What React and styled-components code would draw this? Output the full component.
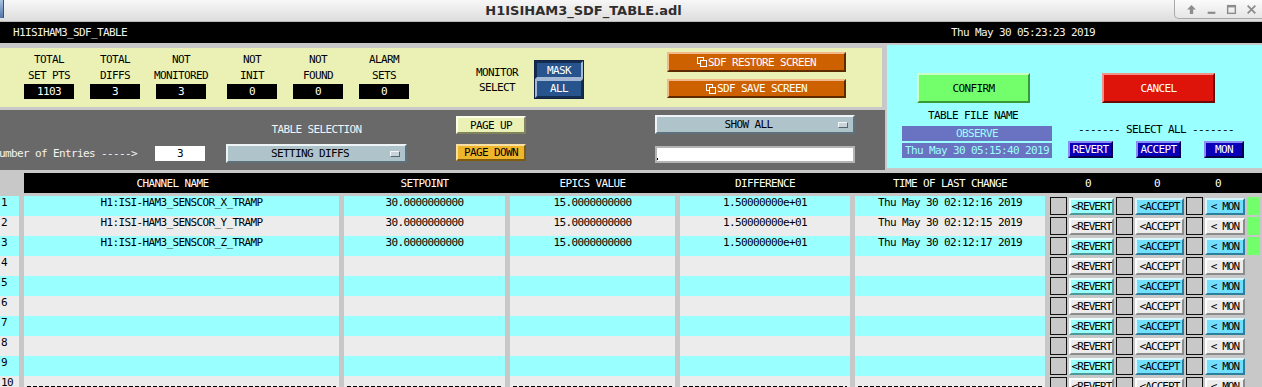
import React from "react";
import styled, { createGlobalStyle, css } from "styled-components";

const MONO = `"DejaVu Sans Mono", "Liberation Mono", monospace`;

const GlobalStyle = createGlobalStyle`
  html, body {
    margin: 0;
    padding: 0;
    background: #c8c8c8;
    overflow: hidden;
  }
  * {
    box-sizing: border-box;
  }
`;

const Screen = styled.div`
  width: 1262px;
  height: 387px;
  overflow: hidden;
  background: #c8c8c8;
  font-family: ${MONO};
  font-size: 11px;
  letter-spacing: -0.62px;
  color: #000;
`;

/* ---------- window decoration ---------- */

const TitleBar = styled.div`
  height: 22px;
  display: flex;
  align-items: flex-start;
  background: linear-gradient(#f7f7f7, #dddddd);
  border-bottom: 1px solid #bcbcbc;
  letter-spacing: 0;
`;

const AppIcon = styled.div`
  width: 4px;
  height: 18px;
  background: linear-gradient(#a9c2e2, #4f74a8);
  border-right: 1px solid #34527a;
`;

const WindowTitle = styled.div`
  flex: 1;
  height: 21px;
  display: flex;
  align-items: center;
  justify-content: center;
  padding-right: 11px;
  font-family: "DejaVu Sans", "Liberation Sans", sans-serif;
  font-weight: bold;
  font-size: 13px;
  color: #2e2e2e;
`;

const WindowControls = styled.div`
  width: 88px;
  height: 19px;
  display: flex;
  align-items: center;
  justify-content: space-around;
  padding: 0 0 0 6px;
  border: 1px solid #a9a9a9;
  border-top: none;
  border-right: none;
  border-bottom-left-radius: 5px;
  background: linear-gradient(#fbfbfb, #e6e6e6);
`;

const ScreenHeader = styled.div`
  height: 21px;
  background: #000;
  color: #f2f2f2;
  display: grid;
  grid-template-columns: 938px 1fr;
  align-items: center;
  padding-left: 13px;
`;

/* ---------- bevelled widgets ---------- */

const Bevel = styled.div`
  display: flex;
  align-items: center;
  justify-content: center;
  white-space: nowrap;
  overflow: hidden;
  background: ${(p) => p.$bg};
  border-style: solid;
  border-width: 2px;
  border-color: ${(p) => `${p.$hi} ${p.$lo} ${p.$lo} ${p.$hi}`};
`;

/* ---------- top section ---------- */

const TopSection = styled.div`
  display: grid;
  grid-template-columns: 885px 1fr;
  column-gap: 2px;
  padding-top: 2px;
  height: 127px;
`;

const LeftColumn = styled.div`
  display: flex;
  flex-direction: column;
  gap: 3px;
  padding-top: 3px;
`;

const MonitorPanel = styled.div`
  width: 882px;
  height: 59px;
  background: #ebf1b5;
  display: flex;
  align-items: flex-start;
`;

const StatGroup = styled.div`
  display: flex;
  gap: 16px;
  padding: 4px 0 0 24px;
`;

const Stat = styled.div`
  width: 50px;
  margin-left: ${(p) => p.$extra || 0}px;
  display: flex;
  flex-direction: column;
  align-items: center;
  line-height: 16px;
  white-space: nowrap;
`;

const StatValue = styled.div`
  width: 50px;
  height: 15px;
  background: #000;
  color: #fff;
  text-align: center;
  line-height: 15px;
`;

const MonitorSelect = styled.div`
  display: flex;
  align-items: center;
  gap: 16px;
  margin: 12px 0 0 67px;
`;

const MonitorLabel = styled.div`
  line-height: 15px;
  text-align: center;
`;

const ChoiceStack = styled.div`
  width: 50px;
  display: flex;
  flex-direction: column;
  border: 1px solid #0f2444;
`;

const ChoiceButton = styled(Bevel)`
  height: ${(p) => p.$h}px;
  color: #fff;
`;

const SdfGroup = styled.div`
  display: flex;
  flex-direction: column;
  gap: 7px;
  margin: 4px 0 0 83px;
`;

const SdfButton = styled(Bevel)`
  width: 179px;
  height: ${(p) => p.$h}px;
  color: #fff;
  gap: 1px;
`;

const ControlPanel = styled.div`
  height: 60px;
  background: #696969;
  display: flex;
  align-items: flex-start;
  color: #f4f4f4;
`;

const EntriesGroup = styled.div`
  display: flex;
  align-items: center;
  gap: 18px;
  margin: 36px 0 0 -7px;
  white-space: nowrap;
`;

const EntriesBox = styled.div`
  width: 50px;
  height: 15px;
  background: #fff;
  color: #000;
  text-align: center;
  line-height: 15px;
`;

const SelectionGroup = styled.div`
  display: flex;
  flex-direction: column;
  align-items: center;
  gap: 8px;
  margin: 14px 0 0 21px;
  line-height: 12px;
`;

const MenuButton = styled(Bevel)`
  width: ${(p) => p.$w}px;
  height: 19px;
  color: #000;
  justify-content: flex-start;
`;

const MenuText = styled.span`
  flex: 1;
  text-align: center;
  padding-left: 2px;
`;

const MenuMark = styled.span`
  width: 10px;
  height: 6px;
  margin-right: 5px;
  background: #c8d4da;
  border: 1px solid;
  border-color: #f2f6f8 #56666e #56666e #f2f6f8;
`;

const PageGroup = styled.div`
  display: flex;
  flex-direction: column;
  gap: 10px;
  margin: 6px 0 0 49px;
`;

const PageButton = styled(Bevel)`
  width: 70px;
  height: ${(p) => p.$h}px;
  color: #000;
`;

const FilterGroup = styled.div`
  display: flex;
  flex-direction: column;
  gap: 12px;
  margin: 5px 0 0 129px;
`;

const TextField = styled.div`
  width: 200px;
  height: 17px;
  background: #fff;
  border: 2px solid #b4b4b4;
  display: flex;
  align-items: flex-end;
`;

const Caret = styled.span`
  width: 1px;
  height: 2px;
  background: #000;
  margin: 0 0 1px 0;
`;

/* ---------- commit (cyan) panel ---------- */

const CommitPanel = styled.div`
  height: 123px;
  background: #99ffff;
  display: grid;
  grid-template-columns: 150px 176px;
  column-gap: 16px;
  padding-left: 15px;
`;

const CommitColumn = styled.div`
  display: flex;
  flex-direction: column;
  padding-top: 28px;
`;

const BigButton = styled(Bevel)`
  width: 113px;
  height: 30px;
  margin-left: ${(p) => p.$ml}px;
  align-self: flex-start;
  color: ${(p) => p.$fg};
`;

const FileLabel = styled.div`
  margin-top: 7px;
  line-height: 12px;
  text-align: center;
  padding-right: 8px;
`;

const NameBox = styled.div`
  margin-top: ${(p) => p.$mt}px;
  height: 15px;
  background: #6a73c1;
  color: #9cffff;
  text-align: center;
  line-height: 15px;
  white-space: nowrap;
`;

const SelectAllLabel = styled.div`
  margin-top: 21px;
  line-height: 12px;
  text-align: center;
  white-space: nowrap;
`;

const SelectAllRow = styled.div`
  margin-top: 5px;
  display: flex;
  justify-content: space-between;
`;

const SelectAllButton = styled(Bevel)`
  width: ${(p) => p.$w}px;
  height: 17px;
  color: #fff;
`;

/* ---------- table ---------- */

const TableArea = styled.div`
  padding-top: 3px;
`;

const HeaderRow = styled.div`
  margin-left: 24px;
  height: 20px;
  margin-bottom: 3px;
  background: #000;
  color: #fff;
  display: grid;
  grid-template-columns: 315px 161px 165px 170px 190px 1fr;
  column-gap: 5px;
  align-items: center;
  white-space: nowrap;
`;

const HeaderCell = styled.div`
  text-align: center;
  padding-right: ${(p) => p.$pr || 0}px;
`;

const Counters = styled.div`
  display: flex;
`;

const Counter = styled.span`
  width: 40px;
  margin-left: ${(p) => p.$ml}px;
  text-align: center;
`;

const Row = styled.div`
  height: 20px;
  display: grid;
  grid-template-columns: 19px 315px 161px 165px 170px 190px 1fr;
  column-gap: 5px;
`;

const dashRule = css`
  background-image: repeating-linear-gradient(
    to right,
    #000 0 4px,
    transparent 4px 6px
  );
  background-size: calc(100% - 6px) 1px;
  background-position: 3px 10px;
  background-repeat: no-repeat;
`;

const Cell = styled.div`
  background-color: ${(p) => p.$bg};
  line-height: 14px;
  text-align: ${(p) => p.$align || "center"};
  padding-left: ${(p) => (p.$align === "left" ? 1 : 0)}px;
  white-space: nowrap;
  overflow: hidden;
  ${(p) => p.$dashed && dashRule}
`;

const RowControls = styled.div`
  display: flex;
  align-items: center;
  gap: 2px;
`;

const CheckBox = styled.div`
  width: 17px;
  height: 18px;
  background: #c8c8c8;
  border: 1px solid #111;
`;

const RowButton = styled(Bevel)`
  width: ${(p) => p.$w}px;
  height: 17px;
  letter-spacing: -0.9px;
`;

const Indicator = styled.div`
  width: 13px;
  height: 18px;
  background: ${(p) => (p.$on ? "#73ff6b" : "transparent")};
`;

/* ---------- icons ---------- */

const UpIcon = () => (
  <svg width="11" height="11" viewBox="0 0 10 10">
    <path d="M5 1 L9 5 H6.5 V9 H3.5 V5 H1 Z" fill="#8c8c8c" />
  </svg>
);

const MinIcon = () => (
  <svg width="11" height="11" viewBox="0 0 10 10">
    <rect x="1.5" y="7" width="7" height="2" fill="#8c8c8c" />
  </svg>
);

const MaxIcon = () => (
  <svg width="11" height="11" viewBox="0 0 10 10">
    <rect x="1.5" y="1.5" width="7" height="7" fill="none" stroke="#8c8c8c" strokeWidth="1.3" />
    <rect x="1.5" y="1.5" width="7" height="1.6" fill="#8c8c8c" />
  </svg>
);

const CloseIcon = () => (
  <svg width="11" height="11" viewBox="0 0 10 10">
    <path d="M1.5 1.5 L8.5 8.5 M8.5 1.5 L1.5 8.5" stroke="#8c8c8c" strokeWidth="1.6" />
  </svg>
);

const RelatedIcon = () => (
  <svg width="10" height="10" viewBox="0 0 10 10">
    <rect x="0.5" y="0.5" width="6" height="6" fill="none" stroke="#fff" />
    <rect x="3.5" y="3.5" width="6" height="6" fill="#cd6100" stroke="#fff" />
  </svg>
);

/* ---------- data ---------- */

const stats = [
  { top: "TOTAL", bottom: "SET PTS", value: "1103" },
  { top: "TOTAL", bottom: "DIFFS", value: "3" },
  { top: "NOT", bottom: "MONITORED", value: "3" },
  { top: "NOT", bottom: "INIT", value: "0", extra: 5 },
  { top: "NOT", bottom: "FOUND", value: "0" },
  { top: "ALARM", bottom: "SETS", value: "0" },
];

const channels = [
  {
    name: "H1:ISI-HAM3_SENSCOR_X_TRAMP",
    setpoint: "30.0000000000",
    epics: "15.0000000000",
    diff: "1.50000000e+01",
    time: "Thu May 30 02:12:16 2019",
  },
  {
    name: "H1:ISI-HAM3_SENSCOR_Y_TRAMP",
    setpoint: "30.0000000000",
    epics: "15.0000000000",
    diff: "1.50000000e+01",
    time: "Thu May 30 02:12:15 2019",
  },
  {
    name: "H1:ISI-HAM3_SENSCOR_Z_TRAMP",
    setpoint: "30.0000000000",
    epics: "15.0000000000",
    diff: "1.50000000e+01",
    time: "Thu May 30 02:12:17 2019",
  },
];

const rows = Array.from({ length: 10 }, (_, i) => ({ n: i + 1, ...(channels[i] || {}) }));

const bevels = {
  blue: { $bg: "#27548d", $hi: "#a4b8d6", $lo: "#132c50" },
  bluePressed: { $bg: "#27548d", $hi: "#132c50", $lo: "#a4b8d6" },
  orange: { $bg: "#cd6100", $hi: "#f2b98a", $lo: "#5e2a00" },
  menu: { $bg: "#afc3cb", $hi: "#eef4f6", $lo: "#5f717a" },
  pageUp: { $bg: "#ebf1b5", $hi: "#fbfde9", $lo: "#7f845a" },
  pageDown: { $bg: "#eeb62b", $hi: "#f9dfa0", $lo: "#7f5c0c" },
  green: { $bg: "#73ff6b", $hi: "#ccffc6", $lo: "#3a9934" },
  red: { $bg: "#de1309", $hi: "#f2908a", $lo: "#6a0804" },
  navy: { $bg: "#0a00b8", $hi: "#8a8cf4", $lo: "#04004e" },
  cyanBtn: { $bg: "#99ffff", $hi: "#e8ffff", $lo: "#4c9a9a" },
  skyBtn: { $bg: "#73dfff", $hi: "#d4f6ff", $lo: "#2c7f9c" },
  grayBtn: { $bg: "#ececec", $hi: "#ffffff", $lo: "#8c8c8c" },
};

const TableRow = ({ row }) => {
  const odd = row.n % 2 === 1;
  const bg = odd ? "#99ffff" : "#ececec";
  const dashed = row.n === 10;
  const revert = odd ? bevels.cyanBtn : bevels.grayBtn;
  const other = odd ? bevels.skyBtn : bevels.grayBtn;
  return (
    <Row>
      <Cell $bg={bg} $align="left">{row.n}</Cell>
      <Cell $bg={bg} $dashed={dashed}>{row.name}</Cell>
      <Cell $bg={bg} $dashed={dashed}>{row.setpoint}</Cell>
      <Cell $bg={bg} $dashed={dashed}>{row.epics}</Cell>
      <Cell $bg={bg} $dashed={dashed}>{row.diff}</Cell>
      <Cell $bg={bg} $dashed={dashed}>{row.time}</Cell>
      <RowControls>
        <CheckBox />
        <RowButton $w={45} {...revert}>&lt;REVERT</RowButton>
        <CheckBox />
        <RowButton $w={49} {...other}>&lt;ACCEPT</RowButton>
        <CheckBox />
        <RowButton $w={40} {...other}>&lt; MON</RowButton>
        <Indicator $on={!!row.name} />
      </RowControls>
    </Row>
  );
};

export default function App() {
  return (
    <Screen>
      <GlobalStyle />
      <TitleBar>
        <AppIcon />
        <WindowTitle>H1ISIHAM3_SDF_TABLE.adl</WindowTitle>
        <WindowControls>
          <UpIcon />
          <MinIcon />
          <MaxIcon />
          <CloseIcon />
        </WindowControls>
      </TitleBar>

      <ScreenHeader>
        <span>H1ISIHAM3_SDF_TABLE</span>
        <span>Thu May 30 05:23:23 2019</span>
      </ScreenHeader>

      <TopSection>
        <LeftColumn>
          <MonitorPanel>
            <StatGroup>
              {stats.map((s) => (
                <Stat key={s.bottom} $extra={s.extra}>
                  <span>{s.top}</span>
                  <span>{s.bottom}</span>
                  <StatValue>{s.value}</StatValue>
                </Stat>
              ))}
            </StatGroup>
            <MonitorSelect>
              <MonitorLabel>
                MONITOR
                <br />
                SELECT
              </MonitorLabel>
              <ChoiceStack>
                <ChoiceButton $h={18} {...bevels.bluePressed}>MASK</ChoiceButton>
                <ChoiceButton $h={19} {...bevels.blue}>ALL</ChoiceButton>
              </ChoiceStack>
            </MonitorSelect>
            <SdfGroup>
              <SdfButton $h={20} {...bevels.orange}>
                <RelatedIcon />
                SDF RESTORE SCREEN
              </SdfButton>
              <SdfButton $h={19} {...bevels.orange}>
                <RelatedIcon />
                SDF SAVE SCREEN
              </SdfButton>
            </SdfGroup>
          </MonitorPanel>

          <ControlPanel>
            <EntriesGroup>
              <span>Number of Entries -----&gt;</span>
              <EntriesBox>3</EntriesBox>
            </EntriesGroup>
            <SelectionGroup>
              <span>TABLE SELECTION</span>
              <MenuButton $w={181} {...bevels.menu}>
                <MenuText>SETTING DIFFS</MenuText>
                <MenuMark />
              </MenuButton>
            </SelectionGroup>
            <PageGroup>
              <PageButton $h={18} {...bevels.pageUp}>PAGE UP</PageButton>
              <PageButton $h={17} {...bevels.pageDown}>PAGE DOWN</PageButton>
            </PageGroup>
            <FilterGroup>
              <MenuButton $w={200} {...bevels.menu}>
                <MenuText>SHOW ALL</MenuText>
                <MenuMark />
              </MenuButton>
              <TextField>
                <Caret />
              </TextField>
            </FilterGroup>
          </ControlPanel>
        </LeftColumn>

        <CommitPanel>
          <CommitColumn>
            <BigButton $ml={15} $fg="#000" {...bevels.green}>CONFIRM</BigButton>
            <FileLabel>TABLE FILE NAME</FileLabel>
            <NameBox $mt={4}>OBSERVE</NameBox>
            <NameBox $mt={2}>Thu May 30 05:15:40 2019</NameBox>
          </CommitColumn>
          <CommitColumn>
            <BigButton $ml={34} $fg="#fff" {...bevels.red}>CANCEL</BigButton>
            <SelectAllLabel>------- SELECT ALL -------</SelectAllLabel>
            <SelectAllRow>
              <SelectAllButton $w={45} {...bevels.navy}>REVERT</SelectAllButton>
              <SelectAllButton $w={45} {...bevels.navy}>ACCEPT</SelectAllButton>
              <SelectAllButton $w={40} {...bevels.navy}>MON</SelectAllButton>
            </SelectAllRow>
          </CommitColumn>
        </CommitPanel>
      </TopSection>

      <TableArea>
        <HeaderRow>
          <HeaderCell $pr={18}>CHANNEL NAME</HeaderCell>
          <HeaderCell>SETPOINT</HeaderCell>
          <HeaderCell>EPICS VALUE</HeaderCell>
          <HeaderCell>DIFFERENCE</HeaderCell>
          <HeaderCell>TIME OF LAST CHANGE</HeaderCell>
          <Counters>
            <Counter $ml={18}>0</Counter>
            <Counter $ml={29}>0</Counter>
            <Counter $ml={21}>0</Counter>
          </Counters>
        </HeaderRow>
        {rows.map((row) => (
          <TableRow key={row.n} row={row} />
        ))}
      </TableArea>
    </Screen>
  );
}
